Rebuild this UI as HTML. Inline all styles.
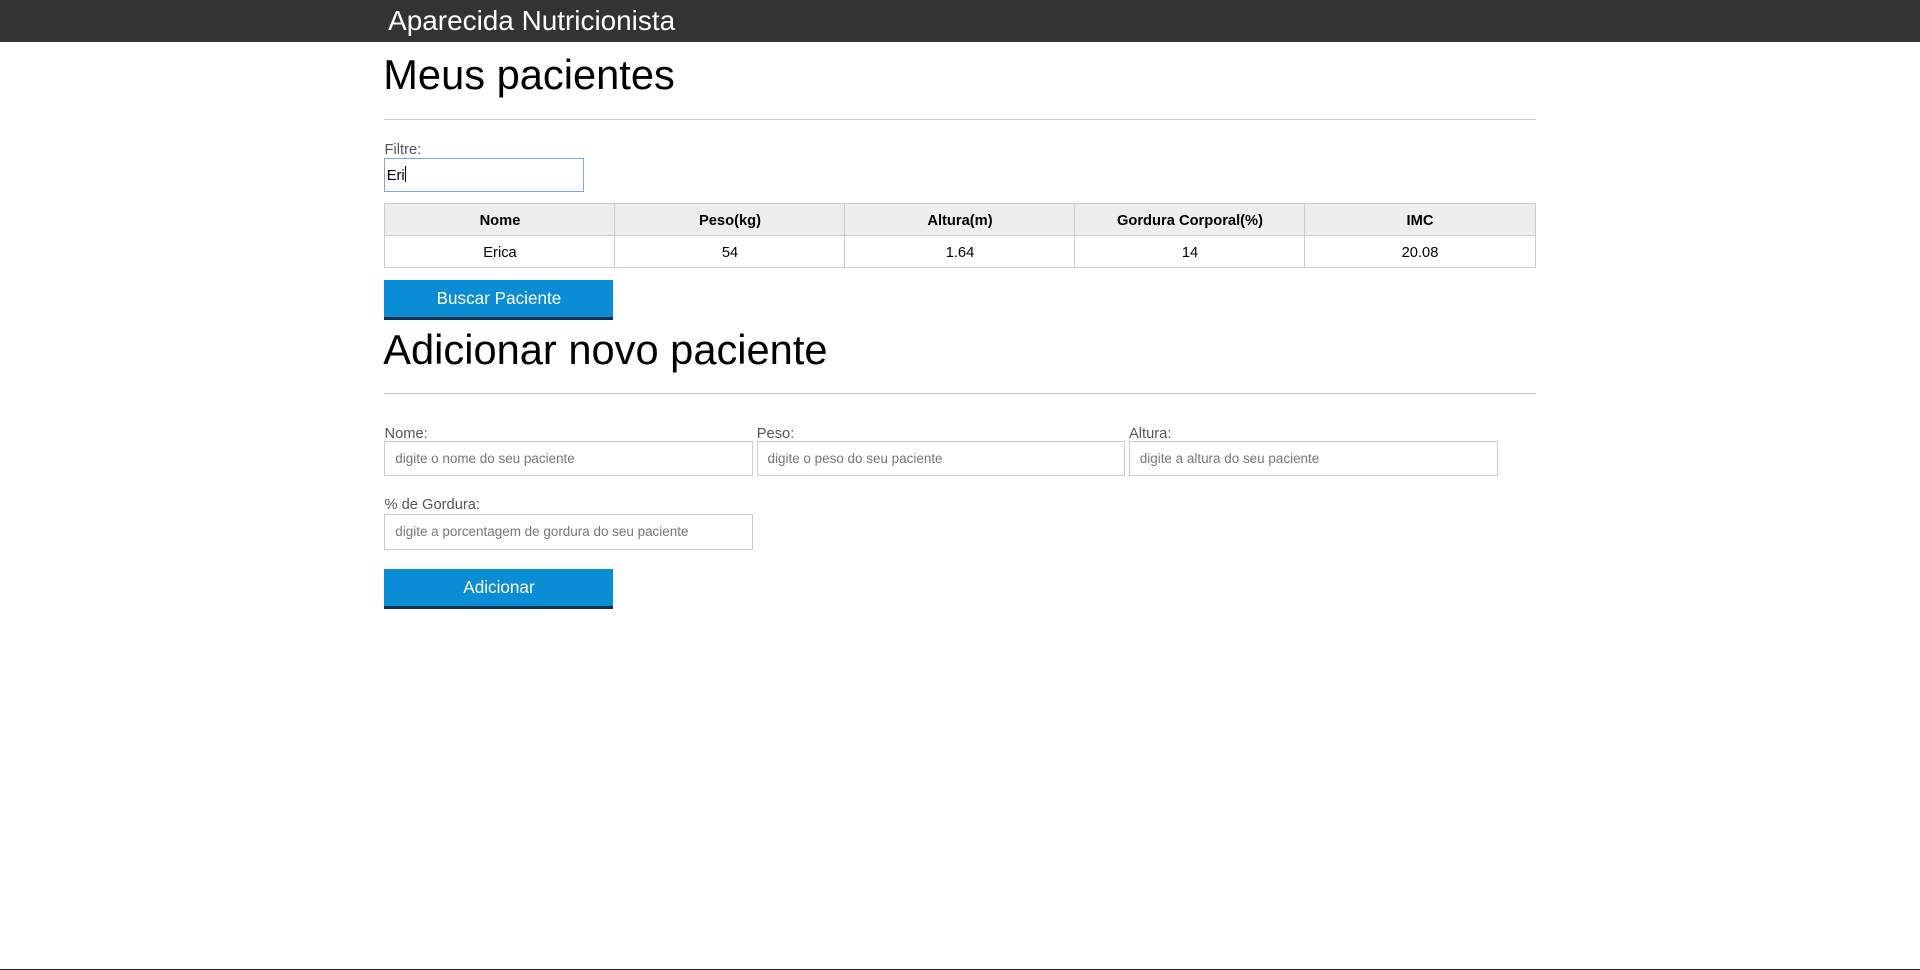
<!DOCTYPE html>
<html><head><meta charset="utf-8">
<style>
html,body{margin:0;padding:0;background:#fff;overflow:hidden}
body{width:1920px;height:970px;position:relative;font-family:"Liberation Sans",Arial,sans-serif}
#z{zoom:1.2244898;position:absolute;left:0;top:0;width:1568px;height:792px}
.a{position:absolute;white-space:nowrap}
.hdr{left:0;top:0;width:1568px;height:34px;background:#333}
.ttl{left:317px;top:3px;font-size:22.8px;color:#fff;line-height:28px}
.h1{left:313px;font-size:34px;line-height:40px;color:#000}
.hr{left:314px;width:940px;height:1px;background:#ccc}
.lbl{font-size:12px;color:#555;line-height:14px}
.inp{box-sizing:border-box;height:29px;border:1px solid #ccc;background:#fff;font-size:11px;color:#777;padding-left:8px;line-height:28px}
table{position:absolute;left:314px;top:166px;width:940px;border-collapse:collapse;font-size:12px;table-layout:fixed}
td,th{border:1px solid #ccc;height:26px;text-align:center;padding:2px 0 0 0;box-sizing:border-box;color:#000}
th{background:#eee;font-weight:bold}
.btn{box-sizing:border-box;width:187px;height:32px;background:#0b8dd6;border-bottom:3px solid #0b3350;color:#fff;font-size:14px;text-align:center;line-height:30px}
</style></head><body><div id="z">
<div class="a hdr"></div>
<div class="a ttl">Aparecida Nutricionista</div>
<div class="a h1" style="top:42px">Meus pacientes</div>
<div class="a hr" style="top:97px"></div>
<div class="a lbl" style="left:314px;top:116px">Filtre:</div>
<div class="a inp" style="left:314px;top:129px;width:163px;height:28px;border:1px solid #7ea6e6;color:#000;padding-left:1px;font-size:12px;line-height:28px">Eri<span style="display:inline-block;width:1px;height:13px;background:#000;vertical-align:-2px"></span></div>
<table><tr><th>Nome</th><th>Peso(kg)</th><th>Altura(m)</th><th>Gordura Corporal(%)</th><th>IMC</th></tr>
<tr><td>Erica</td><td>54</td><td>1.64</td><td>14</td><td>20.08</td></tr></table>
<div class="a btn" style="left:314px;top:229px">Buscar Paciente</div>
<div class="a h1" style="top:266px">Adicionar novo paciente</div>
<div class="a hr" style="top:321px"></div>
<div class="a lbl" style="left:314px;top:348px">Nome:</div>
<div class="a lbl" style="left:618px;top:348px">Peso:</div>
<div class="a lbl" style="left:922px;top:348px">Altura:</div>
<div class="a inp" style="left:314px;top:360px;width:301px">digite o nome do seu paciente</div>
<div class="a inp" style="left:618px;top:360px;width:301px">digite o peso do seu paciente</div>
<div class="a inp" style="left:922px;top:360px;width:301px">digite a altura do seu paciente</div>
<div class="a lbl" style="left:314px;top:406px">% de Gordura:</div>
<div class="a inp" style="left:314px;top:420px;width:301px">digite a porcentagem de gordura do seu paciente</div>
<div class="a btn" style="left:314px;top:465px">Adicionar</div>
</div>
<div style="position:absolute;left:0;top:969px;width:1920px;height:1px;background:#222"></div>
</body></html>
